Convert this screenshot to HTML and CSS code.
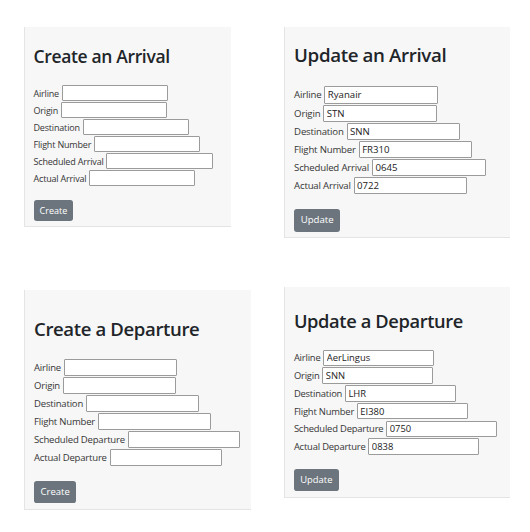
FILE: index.html
```html
<!DOCTYPE html>
<html lang="en">
<head>
<meta charset="utf-8">
<title>Flights</title>
<link rel="stylesheet" href="styles.css">
</head>
<body>
<div class="board">
  <section class="panel panel-a">
    <h2 class="title">Create an Arrival</h2>
    <form class="form">
      <div class="row"><label>Airline</label> <input class="field" type="text"></div>
      <div class="row"><label>Origin</label> <input class="field" type="text"></div>
      <div class="row"><label>Destination</label> <input class="field" type="text"></div>
      <div class="row"><label>Flight Number</label> <input class="field" type="text"></div>
      <div class="row"><label>Scheduled Arrival</label> <input class="field" type="text"></div>
      <div class="row"><label>Actual Arrival</label> <input class="field" type="text"></div>
      <button class="btn" type="button">Create</button>
    </form>
  </section>
  <section class="panel panel-b">
    <h2 class="title">Update an Arrival</h2>
    <form class="form">
      <div class="row"><label>Airline</label> <input class="field" type="text" value="Ryanair"></div>
      <div class="row"><label>Origin</label> <input class="field" type="text" value="STN"></div>
      <div class="row"><label>Destination</label> <input class="field" type="text" value="SNN"></div>
      <div class="row"><label>Flight Number</label> <input class="field" type="text" value="FR310"></div>
      <div class="row"><label>Scheduled Arrival</label> <input class="field" type="text" value="0645"></div>
      <div class="row"><label>Actual Arrival</label> <input class="field" type="text" value="0722"></div>
      <button class="btn" type="button">Update</button>
    </form>
  </section>
  <section class="panel panel-c">
    <h2 class="title">Create a Departure</h2>
    <form class="form">
      <div class="row"><label>Airline</label> <input class="field" type="text"></div>
      <div class="row"><label>Origin</label> <input class="field" type="text"></div>
      <div class="row"><label>Destination</label> <input class="field" type="text"></div>
      <div class="row"><label>Flight Number</label> <input class="field" type="text"></div>
      <div class="row"><label>Scheduled Departure</label> <input class="field" type="text"></div>
      <div class="row"><label>Actual Departure</label> <input class="field" type="text"></div>
      <button class="btn" type="button">Create</button>
    </form>
  </section>
  <section class="panel panel-d">
    <h2 class="title">Update a Departure</h2>
    <form class="form">
      <div class="row"><label>Airline</label> <input class="field" type="text" value="AerLingus"></div>
      <div class="row"><label>Origin</label> <input class="field" type="text" value="SNN"></div>
      <div class="row"><label>Destination</label> <input class="field" type="text" value="LHR"></div>
      <div class="row"><label>Flight Number</label> <input class="field" type="text" value="EI380"></div>
      <div class="row"><label>Scheduled Departure</label> <input class="field" type="text" value="0750"></div>
      <div class="row"><label>Actual Departure</label> <input class="field" type="text" value="0838"></div>
      <button class="btn" type="button">Update</button>
    </form>
  </section>
</div>
</body>
</html>
```

FILE: styles.css
```css
html, body {
  margin: 0;
  padding: 0;
  background: #ffffff;
}

body {
  font-family: "Open Sans", "Noto Sans", sans-serif;
  color: #333333;
}

.board {
  display: grid;
  grid-template-columns: 260px 226px;
  grid-template-rows: 260px auto;
  padding: 27px 0 0 24px;
  align-items: start;
}

.panel {
  box-sizing: border-box;
  background: #f7f7f7;
  border-left: 1px solid #e4e4e4;
  border-bottom: 1px solid #e4e4e4;
  padding: 1.6em 1em 0.5em 0.85em;
}

.panel-a { font-size: 10px; width: 207px; padding-top: 1.87em; }
.panel-b { font-size: 10.7px; width: 226px; padding-top: 1.635em; }
.panel-c { font-size: 10.6px; width: 227px; padding-top: 2.61em; margin-top: 3px; }
.panel-d { font-size: 10.45px; width: 226px; padding-top: 2.19em; }

.title {
  margin: 0 0 1.02em 0;
  font-size: 1.75em;
  line-height: 1.2;
  font-weight: 600;
  letter-spacing: -0.02em;
  color: #212529;
}

.panel-b .title { margin-bottom: 1.01em; }
.panel-d .title { margin-bottom: 0.94em; }

.form {
  display: flex;
  flex-direction: column;
  align-items: flex-start;
  margin: 0;
}

.row {
  display: flex;
  align-items: center;
  gap: 0.28em;
  height: 1.7em;
}

.row label {
  font-size: 0.9em;
  letter-spacing: -0.02em;
  color: #363636;
  white-space: nowrap;
}

.field {
  box-sizing: border-box;
  width: 11.8em;
  height: 1.78em;
  margin: 0;
  padding: 0 0.25em;
  border: 1px solid #9b9b9b;
  border-radius: 1px;
  background: #ffffff;
  font-family: inherit;
  font-size: 0.9em;
  color: #222222;
}

.btn {
  margin-top: 1.45em;
  padding: 0.44em 0.68em;
  border: 0;
  border-radius: 0.3em;
  background: #6c757d;
  color: #ffffff;
  font-family: inherit;
  font-size: 0.9em;
  line-height: 1.5;
}
```
